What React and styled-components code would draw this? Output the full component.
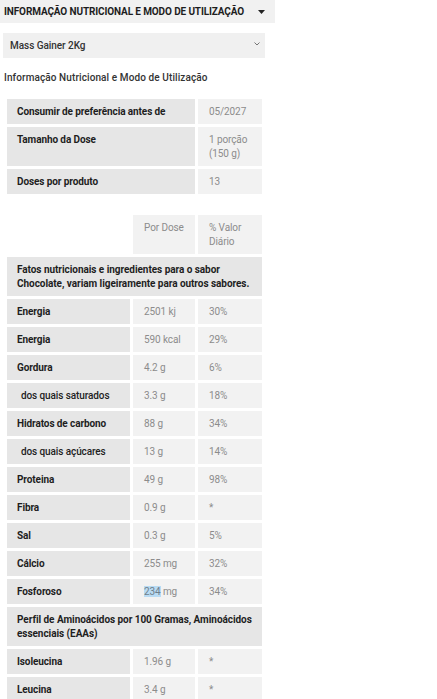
import React from 'react';
import styled, { createGlobalStyle } from 'styled-components';

const GlobalStyle = createGlobalStyle`
  html, body {
    margin: 0;
    padding: 0;
    background: #ffffff;
  }
  body {
    font-family: Roboto, "Liberation Sans", sans-serif;
    font-size: 10px;
    color: #222222;
  }
`;

const specs = [
  { label: 'Consumir de preferência antes de', value: '05/2027' },
  { label: 'Tamanho da Dose', value: ['1 porção', '(150 g)'] },
  { label: 'Doses por produto', value: '13' },
];

const nutrients = [
  { label: 'Energia', dose: '2501 kj', dv: '30%' },
  { label: 'Energia', dose: '590 kcal', dv: '29%' },
  { label: 'Gordura', dose: '4.2 g', dv: '6%' },
  { label: 'dos quais saturados', dose: '3.3 g', dv: '18%', sub: true },
  { label: 'Hidratos de carbono', dose: '88 g', dv: '34%' },
  { label: 'dos quais açúcares', dose: '13 g', dv: '14%', sub: true },
  { label: 'Proteina', dose: '49 g', dv: '98%' },
  { label: 'Fibra', dose: '0.9 g', dv: '*' },
  { label: 'Sal', dose: '0.3 g', dv: '5%' },
  { label: 'Cálcio', dose: '255 mg', dv: '32%' },
  { label: 'Fosforoso', dose: '234 mg', dv: '34%', selected: true },
];

const aminos = [
  { label: 'Isoleucina', dose: '1.96 g', dv: '*' },
  { label: 'Leucina', dose: '3.4 g', dv: '*' },
];

const App = () => {
  return (
    <Page>
      <GlobalStyle />
      <AccordionHeader>
        <HeaderTitle>INFORMAÇÃO NUTRICIONAL E MODO DE UTILIZAÇÃO</HeaderTitle>
        <svg width="7" height="4" viewBox="0 0 7 4">
          <path d="M0 0h7L3.5 4z" fill="#222" />
        </svg>
      </AccordionHeader>

      <Select>
        <span>Mass Gainer 2Kg</span>
        <svg width="6" height="4" viewBox="0 0 6 4">
          <path d="M0.5 0.5L3 3l2.5-2.5" fill="none" stroke="#666" strokeWidth="0.9" />
        </svg>
      </Select>

      <Subtitle>Informação Nutricional e Modo de Utilização</Subtitle>

      <SpecGrid>
        {specs.map((row) => (
          <React.Fragment key={row.label}>
            <LabelCell>{row.label}</LabelCell>
            <ValueCell>
              {Array.isArray(row.value)
                ? row.value.map((line) => <div key={line}>{line}</div>)
                : row.value}
            </ValueCell>
          </React.Fragment>
        ))}
      </SpecGrid>

      <NutritionGrid>
        <BlankCell />
        <ValueCell>Por Dose</ValueCell>
        <ValueCell>
          <div>% Valor</div>
          <div>Diário</div>
        </ValueCell>

        <SectionCell>
          Fatos nutricionais e ingredientes para o sabor
          <br />
          Chocolate, variam ligeiramente para outros sabores.
        </SectionCell>

        {nutrients.map((row, i) => (
          <React.Fragment key={i}>
            <LabelCell $sub={row.sub}>{row.label}</LabelCell>
            <ValueCell>
              {row.selected ? (
                <>
                  <Highlight>234</Highlight> mg
                </>
              ) : (
                row.dose
              )}
            </ValueCell>
            <ValueCell>{row.dv}</ValueCell>
          </React.Fragment>
        ))}

        <SectionCell>
          Perfil de Aminoácidos por 100 Gramas, Aminoácidos
          <br />
          essenciais (EAAs)
        </SectionCell>

        {aminos.map((row) => (
          <React.Fragment key={row.label}>
            <LabelCell>{row.label}</LabelCell>
            <ValueCell>{row.dose}</ValueCell>
            <ValueCell>{row.dv}</ValueCell>
          </React.Fragment>
        ))}
      </NutritionGrid>
    </Page>
  );
};

const Page = styled.div`
  width: 275px;
  padding-bottom: 20px;
`;

const AccordionHeader = styled.div`
  height: 23px;
  background: #f1f1f1;
  display: flex;
  align-items: center;
  justify-content: space-between;
  padding: 0 10px 0 4px;
  box-sizing: border-box;
`;

const HeaderTitle = styled.span`
  font-weight: 700;
  font-size: 10px;
  letter-spacing: -0.12px;
  color: #1e1e1e;
`;

const Select = styled.div`
  margin: 10px 10px 0 3px;
  height: 25px;
  background: #f0f0f0;
  display: flex;
  align-items: center;
  justify-content: space-between;
  padding: 0 5px 0 7px;
  color: #333;
  font-weight: 500;
  letter-spacing: -0.05px;

  svg {
    margin-top: -4px;
  }
`;

const Subtitle = styled.div`
  margin: 13px 0 0 4px;
  line-height: 14px;
  font-weight: 500;
  color: #333;
  letter-spacing: 0.1px;
`;

const SpecGrid = styled.div`
  display: grid;
  grid-template-columns: 188px 64px;
  gap: 3px;
  margin: 14px 0 0 7px;
`;

const NutritionGrid = styled.div`
  display: grid;
  grid-template-columns: 123px 62px 64px;
  gap: 3px;
  margin: 21px 0 0 7px;
`;

const Cell = styled.div`
  padding: 5.5px 10px;
  line-height: 14px;
  letter-spacing: -0.1px;
`;

const BlankCell = styled.div``;

const LabelCell = styled(Cell)`
  background: #e6e6e6;
  font-weight: ${(p) => (p.$sub ? 500 : 700)};
  color: #1e1e1e;
  padding-left: ${(p) => (p.$sub ? '14px' : '10px')};
`;

const ValueCell = styled(Cell)`
  background: #f2f2f2;
  color: #8c8c8c;
  padding-left: 11px;
`;

const SectionCell = styled(Cell)`
  grid-column: 1 / -1;
  background: #e6e6e6;
  font-weight: 700;
  color: #1e1e1e;
  line-height: 14px;
  padding-top: 5.5px;
  padding-bottom: 5.5px;
  letter-spacing: -0.05px;
`;

const Highlight = styled.span`
  background: #b9dbf3;
  color: #6f7f8c;
`;

export default App;
